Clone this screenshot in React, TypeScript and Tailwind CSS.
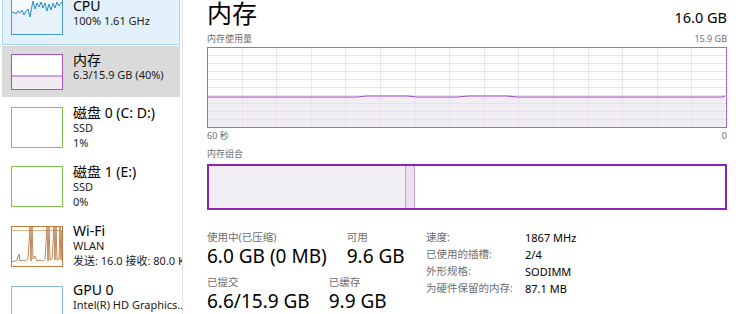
import React from 'react';

// Task Manager – performance / memory page

const cpuPts =
  '0,19 3,18 5,20 7,17 9,19 11,16 13,21 15,17 17,15 19,23 21,12 22,7 24,15 26,9 28,13 30,8 32,14 34,9 36,17 38,10 40,16 42,9 44,14 46,8 48,12 50,9 52,8';

const wifiPts =
  '0,36 4,35 6,34 8,28 9,35 12,34 14,35 17,33 19,1 20,35 21,1 22,33 24,30 26,35 29,34 32,35 34,33 36,1 37,35 38,1 39,34 41,33 43,1 44,34 45,1 46,34 48,33 49,1 50,34 51,5 52,34';

const SideText = ({ title, lines }: { title: string; lines: string[] }) => (
  <div className="ml-[10px] whitespace-nowrap">
    <div className="text-[14px] leading-[15px] text-black">{title}</div>
    {lines.map((l) => (
      <div key={l} className="text-[11px] leading-[15px] text-[#1b1b1b]">
        {l}
      </div>
    ))}
  </div>
);

const Sidebar = () => (
  <div className="w-[183px] shrink-0 h-[314px] overflow-hidden border-r border-[#e4e4e4] flex flex-col">
    {/* CPU – selected */}
    <div className="-mt-[10px] mx-[2px] h-[55px] shrink-0 border border-[#a5d6f4] bg-[#e2f1fb] flex items-start pl-[8px]">
      <svg width="52" height="41" className="mt-[3px] shrink-0">
        <rect x="0.5" y="0.5" width="51" height="40" fill="#f4f9fd" stroke="#4a9bd3" />
        <polygon points={`${cpuPts} 52,40 0,40`} fill="#e6f1fa" />
        <polyline points={cpuPts} fill="none" stroke="#2f8ac8" strokeWidth="1" />
        <rect x="0.5" y="0.5" width="51" height="40" fill="none" stroke="#4a9bd3" />
      </svg>
      <div className="mt-[7px]">
        <SideText title="CPU" lines={['100% 1.61 GHz']} />
      </div>
    </div>

    {/* Memory – hovered */}
    <div className="mt-[1px] mx-[2px] h-[51px] shrink-0 bg-[#dadada] flex items-start pl-[9px]">
      <svg width="52" height="36" className="mt-[8px] shrink-0">
        <rect x="0.5" y="0.5" width="51" height="35" fill="#ffffff" />
        <rect x="0.5" y="22" width="51" height="13.5" fill="#f0ecf2" />
        <line x1="0" y1="22" x2="52" y2="22" stroke="#a354c3" />
        <rect x="0.5" y="0.5" width="51" height="35" fill="none" stroke="#a354c3" />
      </svg>
      <div className="mt-[6px]">
        <SideText title="内存" lines={['6.3/15.9 GB (40%)']} />
      </div>
    </div>

    {/* Disk 0 */}
    <div className="mx-[2px] h-[59px] shrink-0 flex items-start pl-[9px]">
      <div className="mt-[10px] w-[52px] h-[41px] shrink-0 border border-[#7cc24e] bg-white" />
      <div className="mt-[8px]">
        <SideText title="磁盘 0 (C: D:)" lines={['SSD', '1%']} />
      </div>
    </div>

    {/* Disk 1 */}
    <div className="mx-[2px] h-[60px] shrink-0 flex items-start pl-[9px]">
      <div className="mt-[10px] w-[52px] h-[41px] shrink-0 border border-[#7cc24e] bg-white" />
      <div className="mt-[8px]">
        <SideText title="磁盘 1 (E:)" lines={['SSD', '0%']} />
      </div>
    </div>

    {/* Wi-Fi */}
    <div className="mx-[2px] h-[60px] shrink-0 flex items-start pl-[9px]">
      <svg width="52" height="41" className="mt-[10px] shrink-0">
        <rect x="0.5" y="0.5" width="51" height="40" fill="#ffffff" />
        <line x1="0" y1="4.5" x2="52" y2="4.5" stroke="#e2b48c" />
        <polyline points={wifiPts} fill="none" stroke="#b36a30" strokeWidth="0.8" />
        <rect x="0.5" y="0.5" width="51" height="40" fill="none" stroke="#c27a3e" />
      </svg>
      <div className="mt-[7px]">
        <SideText title="Wi-Fi" lines={['WLAN', '发送: 16.0 接收: 80.0 Kbps']} />
      </div>
    </div>

    {/* GPU */}
    <div className="mx-[2px] h-[60px] shrink-0 flex items-start pl-[9px]">
      <div className="mt-[10px] w-[52px] h-[41px] shrink-0 border border-[#86b8e0] bg-white" />
      <div className="mt-[6px]">
        <SideText title="GPU 0" lines={['Intel(R) HD Graphics...']} />
      </div>
    </div>
  </div>
);

const UsageGraph = () => {
  const cols = Array.from({ length: 14 }, (_, i) => Math.round(((i + 1) * 519) / 15) + 0.5);
  const rows = Array.from({ length: 9 }, (_, i) => (i + 1) * 8 + 0.5);
  const usage = '1,50 60,50 150,50 160,49 200,49 210,50 250,50 262,49 300,49 310,50 515,50 518,49';
  return (
    <svg width="520" height="81" className="block">
      <rect x="0" y="0" width="520" height="81" fill="#ffffff" />
      <polygon points={`${usage} 519,80 1,80`} fill="#f1eef3" />
      {rows.map((y) => (
        <line key={y} x1="1" y1={y} x2="519" y2={y} stroke="#ecdff1" />
      ))}
      {cols.map((x) => (
        <line key={x} x1={x} y1="1" x2={x} y2="80" stroke="#ecdff1" />
      ))}
      <polyline points={usage} fill="none" stroke="#a04dc2" strokeWidth="1.2" />
      <rect x="0.5" y="0.5" width="519" height="80" fill="none" stroke="#ad62cc" />
    </svg>
  );
};

const Stat = ({ label, value }: { label: string; value: string }) => (
  <div className="whitespace-nowrap">
    <div className="h-[14px] text-[10.5px] leading-[14px] text-[#6e6e6e]">{label}</div>
    <div className="mt-[1px] h-[22px] text-[19px] leading-[22px] text-black">{value}</div>
  </div>
);

const specs = [
  ['速度:', '1867 MHz'],
  ['已使用的插槽:', '2/4'],
  ['外形规格:', 'SODIMM'],
  ['为硬件保留的内存:', '87.1 MB'],
];

export default function App() {
  return (
    <div className="w-[742px] h-[314px] overflow-hidden bg-white flex font-['Noto_Sans','Noto_Sans_CJK_SC',sans-serif]">
      <Sidebar />

      <div className="flex-1 pl-[24px] pr-[15px] flex flex-col">
        {/* header */}
        <div className="h-[26px] flex items-baseline justify-between">
          <div className="text-[25px] leading-[26px] text-black">内存</div>
          <div className="text-[14.5px] leading-[26px] text-black">16.0 GB</div>
        </div>

        <div className="mt-[7px] h-[12px] flex justify-between text-[9px] leading-[12px] text-[#6e6e6e]">
          <span>内存使用量</span>
          <span>15.9 GB</span>
        </div>

        <div className="mt-[2px]">
          <UsageGraph />
        </div>

        <div className="mt-[2px] h-[12px] flex justify-between text-[9px] leading-[12px] text-[#6e6e6e]">
          <span>60 秒</span>
          <span>0</span>
        </div>

        <div className="mt-[6px] h-[12px] text-[9px] leading-[12px] text-[#6e6e6e]">内存组合</div>

        {/* composition bar */}
        <div className="mt-[4px] h-[46px] border-2 border-[#8c23b3] flex">
          <div className="w-[196px] bg-[#f1eef3]" />
          <div className="w-[10px] bg-[#ebe0f0] border-x border-[#c99ddb]" />
          <div className="flex-1 bg-white" />
        </div>

        {/* stats */}
        <div className="flex">
          <div className="w-[219px] shrink-0 mt-[20px]">
            <div className="flex gap-[20px]">
              <Stat label="使用中(已压缩)" value="6.0 GB (0 MB)" />
              <Stat label="可用" value="9.6 GB" />
            </div>
            <div className="mt-[8px] flex gap-[19px]">
              <Stat label="已提交" value="6.6/15.9 GB" />
              <Stat label="已缓存" value="9.9 GB" />
            </div>
          </div>

          <div className="mt-[19px] flex flex-col whitespace-nowrap">
            {specs.map(([k, v]) => (
              <div key={k} className="h-[17px] flex items-center">
                <div className="w-[99px] text-[10.5px] leading-[17px] text-[#6e6e6e]">{k}</div>
                <div className="text-[11px] leading-[17px] text-black">{v}</div>
              </div>
            ))}
          </div>
        </div>
      </div>
    </div>
  );
}
